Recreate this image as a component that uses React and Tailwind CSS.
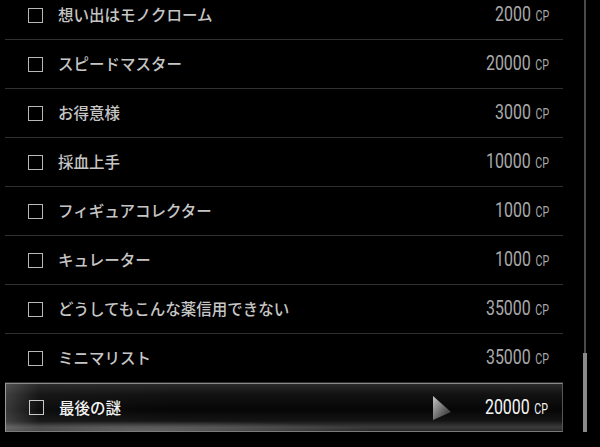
import React from "react";

const rows = [
  { name: "想い出はモノクローム", cp: 2000 },
  { name: "スピードマスター", cp: 20000 },
  { name: "お得意様", cp: 3000 },
  { name: "採血上手", cp: 10000 },
  { name: "フィギュアコレクター", cp: 1000 },
  { name: "キュレーター", cp: 1000 },
  { name: "どうしてもこんな薬信用できない", cp: 35000 },
  { name: "ミニマリスト", cp: 35000 },
];

const jp = "font-['Noto_Sans_CJK_JP','Noto_Sans',sans-serif]";

function Checkbox({ active }) {
  return (
    <span
      className={`block w-[15px] h-[15px] border-[1.5px] ${
        active ? "border-[#c8c8c8]" : "border-[#b8b8b8]"
      }`}
    />
  );
}

function Points({ value, active }) {
  return (
    <span
      className={`inline-flex items-baseline origin-right scale-x-[0.76] font-['Roboto',sans-serif] ${
        active ? "text-[#f4f4f4]" : "text-[#a9a9a9]"
      }`}
    >
      <span className="text-[21px] leading-none">{value}</span>
      <span className="ml-[6px] text-[14px] leading-none">CP</span>
    </span>
  );
}

function Row({ name, cp }) {
  return (
    <div className="h-[49px] flex items-center border-b border-[#2e3131] pl-[23px] pr-[14px]">
      <Checkbox />
      <span className={`ml-[15px] text-[15.5px] font-medium text-[#c6c6c6] ${jp}`}>{name}</span>
      <span className="ml-auto">
        <Points value={cp} />
      </span>
    </div>
  );
}

function SelectedRow({ name, cp }) {
  return (
    <div className="relative h-[49px] flex items-center pl-[23px] pr-[14px] border border-t-[#8a8a8a] border-l-[#9a9a9a] border-r-[#555] border-b-[#7a7a7a] bg-[linear-gradient(180deg,#2a2a2a_0%,#121212_22%,#060606_55%,#141414_78%,#3c3c3c_92%,#262626_100%)] overflow-hidden">
      {/* glossy sheen along the left and lower edges */}
      <div className="pointer-events-none absolute inset-0 bg-[linear-gradient(90deg,rgba(150,150,150,0.35)_0%,rgba(60,60,60,0.12)_6%,transparent_30%)]" />
      <div className="pointer-events-none absolute left-0 right-0 bottom-0 h-[14px] bg-[radial-gradient(ellipse_60%_100%_at_25%_100%,rgba(170,170,170,0.45),transparent_70%)]" />
      <div className="relative flex items-center w-full">
        <Checkbox active />
        <span className={`ml-[15px] text-[15.5px] font-medium text-[#f2f2f2] ${jp}`}>{name}</span>
        <span className="ml-auto mr-[14px]">
          <svg width="18" height="24" viewBox="0 0 18 24" className="block">
            <defs>
              <linearGradient id="cursorFill" x1="0" y1="0" x2="1" y2="1">
                <stop offset="0%" stopColor="#c8c8c8" />
                <stop offset="55%" stopColor="#6a6a6a" />
                <stop offset="100%" stopColor="#242424" />
              </linearGradient>
            </defs>
            <polygon points="0,0 18,16 0,24" fill="url(#cursorFill)" />
          </svg>
        </span>
        <Points value={cp} active />
      </div>
    </div>
  );
}

export default function App() {
  return (
    <div className="w-[600px] h-[447px] bg-black overflow-hidden flex">
      <div className="ml-[5px] w-[558px] -mt-[9px] flex flex-col">
        {rows.map((r) => (
          <Row key={r.name} {...r} />
        ))}
        <SelectedRow name="最後の謎" cp={20000} />
      </div>
      <div className="ml-[19px] w-[5px] h-[432px] flex flex-col items-center">
        <div className="flex-1 w-[2px] bg-[#4a4a4a]" />
        <div className="h-[79px] w-[4px] bg-[#8a8a8a]" />
      </div>
    </div>
  );
}
